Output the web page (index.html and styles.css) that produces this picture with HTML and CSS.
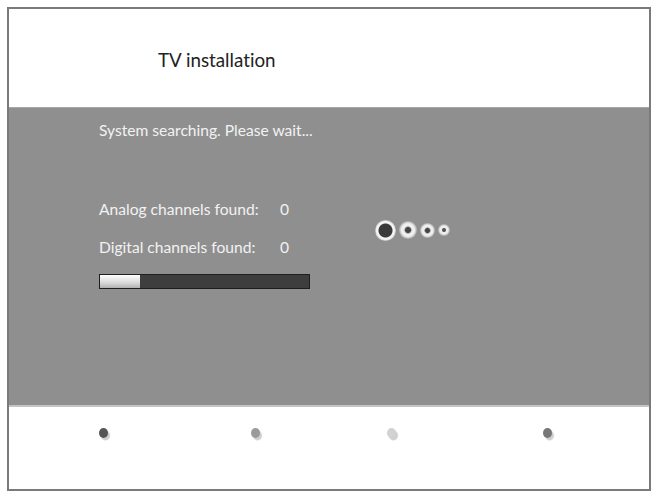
FILE: index.html
```html
<!DOCTYPE html>
<html>
<head>
<meta charset="utf-8">
<link rel="stylesheet" href="styles.css">
</head>
<body>
<div class="frame">
  <header class="head">
    <h1 class="title">TV installation</h1>
  </header>
  <main class="band">
    <div class="info">
      <p class="status">System searching. Please wait...</p>
      <div class="row row-first"><span class="label">Analog channels found:</span><span class="val">0</span></div>
      <div class="row"><span class="label">Digital channels found:</span><span class="val">0</span></div>
      <div class="bar"><div class="fill" style="width:40px"></div></div>
    </div>
    <div class="spinner">
      <span class="sp sp1"></span>
      <span class="sp sp2"></span>
      <span class="sp sp3"></span>
      <span class="sp sp4"></span>
    </div>
  </main>
  <footer class="foot">
    <span class="dot d1"></span>
    <span class="dot d2"></span>
    <span class="dot d3"></span>
    <span class="dot d4"></span>
  </footer>
</div>
</body>
</html>
```
FILE: styles.css
```css
html, body { margin: 0; padding: 0; background: #fff; }
body { font-family: Lato, "Open Sans", sans-serif; font-variant-ligatures: none; }
.frame {
  margin: 7px 0 0 7px;
  width: 640px;
  height: 480px;
  border: 2px solid #7a7a7a;
  display: flex;
  flex-direction: column;
  background: #fff;
}
.head {
  height: 98px;
  box-sizing: border-box;
  padding: 40px 0 0 149px;
}
.title {
  margin: 0;
  font-weight: 400;
  font-size: 18.8px;
  line-height: 22px;
  color: #222;
}
.band {
  height: 298px;
  box-sizing: border-box;
  background: #8f8f8f;
  border-top: 1px solid #a6a6a6;
  display: flex;
  padding: 13px 0 0 90px;
  color: #f2f2f2;
}
.info { width: 221px; display: flex; flex-direction: column; }
.status { margin: 0; font-size: 15.6px; line-height: 18px; }
.row { display: flex; font-size: 15.6px; line-height: 18px; margin-top: 20px; }
.row-first { margin-top: 61px; }
.label { width: 181px; }
.bar {
  margin-top: 18px;
  width: 209px;
  height: 13px;
  border: 1px solid #1e1e1e;
  background: #3e3e3e;
}
.fill {
  height: 100%;
  background: linear-gradient(#ffffff, #d8d8d8 60%, #b0b0b0);
}
.spinner {
  margin: 98px 0 0 55px;
  display: flex;
  align-items: center;
  gap: 3px;
  height: 22px;
}
.sp { display: block; border-radius: 50%; }
.sp1 {
  width: 21px; height: 21px;
  background: radial-gradient(circle, #3a3a3a 0 6.5px, #f4f4f4 7.5px 9px, #bcbcbc 10.5px);
}
.sp2 {
  width: 18px; height: 18px;
  background: radial-gradient(circle, #454545 0 2.5px, #eeeeee 4px 6.5px, #a8a8a8 9px);
}
.sp3 {
  width: 15px; height: 15px;
  background: radial-gradient(circle, #454545 0 2px, #eeeeee 3.5px 5.5px, #a8a8a8 7.5px);
}
.sp4 {
  width: 12px; height: 12px;
  background: radial-gradient(circle, #555 0 1.5px, #eeeeee 2.5px 4px, #a8a8a8 6px);
}
.foot {
  flex: 1;
  border-top: 2px solid #c4c4c4;
  display: grid;
  grid-template-columns: 152px 136px 156px 10px;
  padding: 21px 0 0 90px;
  align-content: start;
}
.dot {
  display: block;
  width: 9px; height: 10px;
  border-radius: 50%;
  box-shadow: 2px 2.5px 1px #cfcfcf;
}
.d1 { background: #555; }
.d2 { background: #9a9a9a; }
.d3 { background: #d2d2d2; }
.d4 { background: #777; }
```
